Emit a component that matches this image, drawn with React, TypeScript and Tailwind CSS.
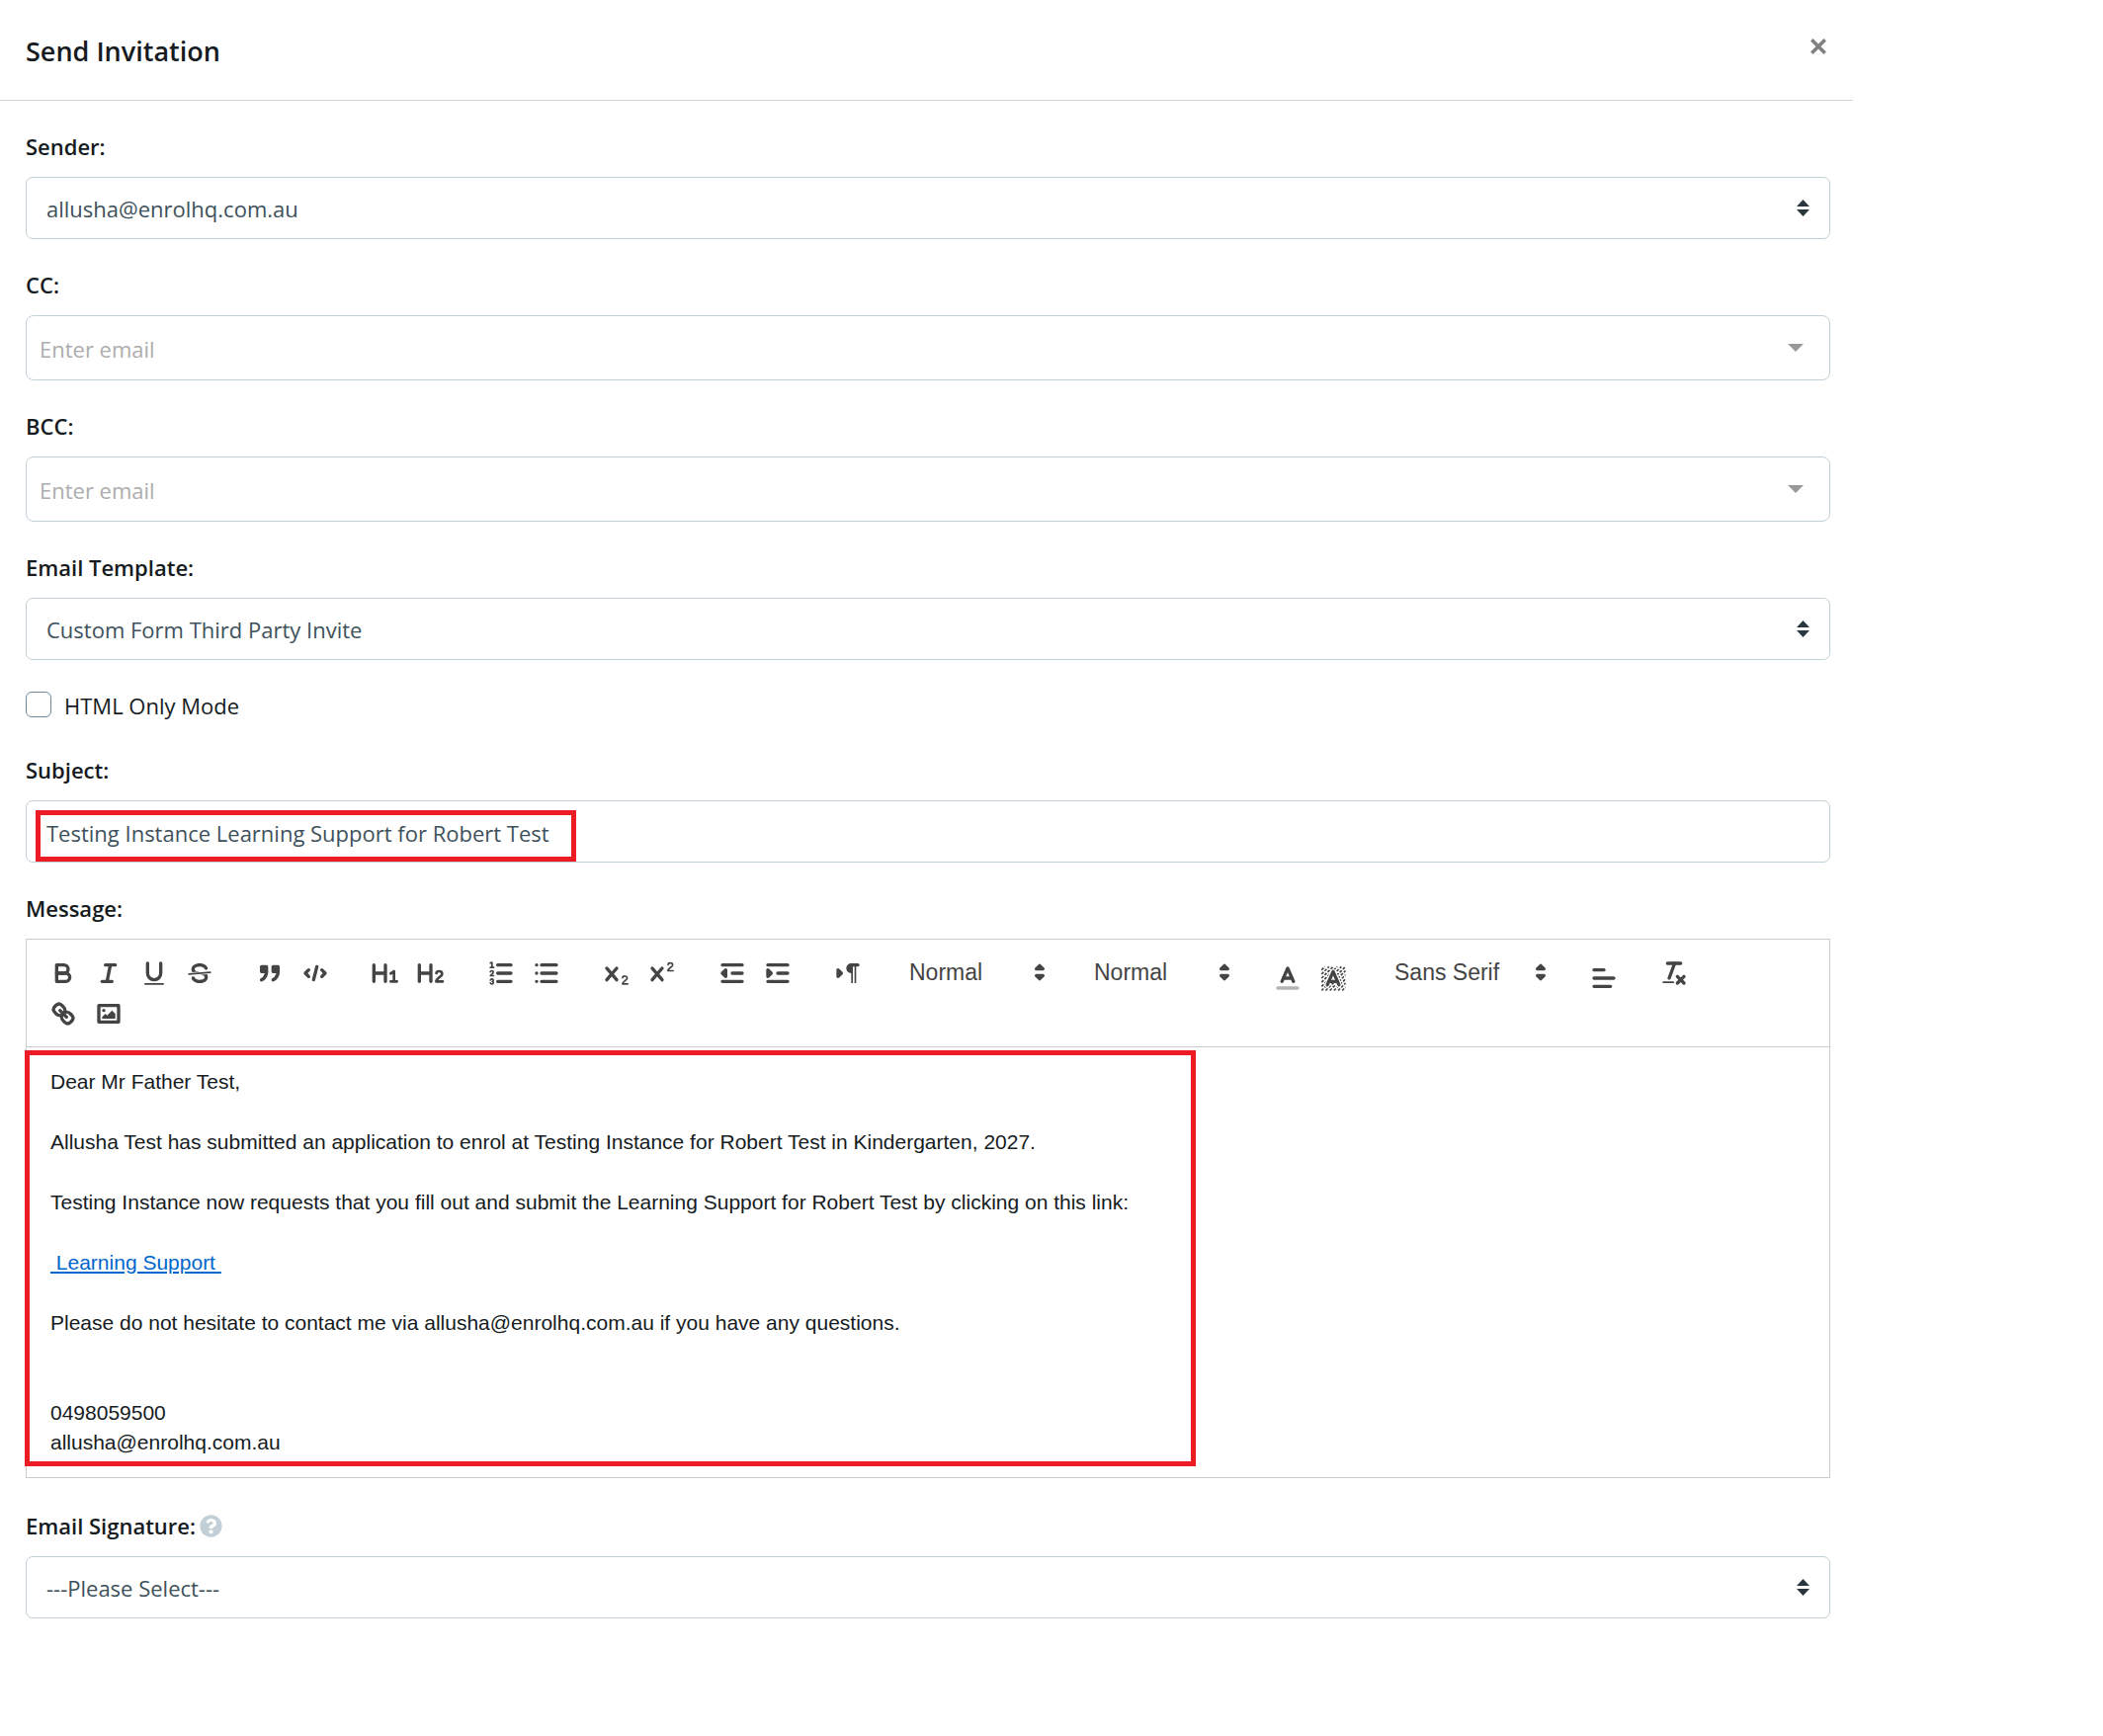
import { useState } from "react";
import type { ReactNode } from "react";
import { FaQuestionCircle } from "react-icons/fa";

const labelClass = "block text-[22px] leading-8 font-semibold text-[#151b1e]";
const controlClass = "block w-full appearance-none bg-white border border-[#c2cfd6] text-[22px] text-[#3e515b] outline-none";

function Icon({ children }: { children: ReactNode }) {
  return (
    <svg viewBox="0 0 18 18" className="w-[30px] h-[30px]" fill="none" stroke="#444" strokeWidth="2" strokeLinecap="round" strokeLinejoin="round">
      {children}
    </svg>
  );
}

const icons: Record<string, ReactNode> = {
  bold: (
    <>
      <path d="M5,4H9.5A2.5,2.5,0,0,1,12,6.5v0A2.5,2.5,0,0,1,9.5,9H5Z" />
      <path d="M5,9h5.5A2.5,2.5,0,0,1,13,11.5v0A2.5,2.5,0,0,1,10.5,14H5Z" />
    </>
  ),
  italic: (
    <>
      <line x1="7" x2="13" y1="4" y2="4" />
      <line x1="5" x2="11" y1="14" y2="14" />
      <line x1="8" x2="10" y1="14" y2="4" />
    </>
  ),
  underline: (
    <>
      <path d="M5,3V9a4,4,0,0,0,4,4H9a4,4,0,0,0,4-4V3" />
      <rect x="3" y="15" width="12" height="1" rx="0.5" fill="#444" stroke="none" />
    </>
  ),
  strike: (
    <>
      <line x1="15.5" x2="2.5" y1="8.5" y2="9.5" strokeWidth="1" />
      <path fill="#444" stroke="none" d="M9.007,8C6.542,7.791,6,7.519,6,6.5,6,5.792,7.283,5,9,5c1.571,0,2.765.679,2.969,1.309a1,1,0,0,0,1.9-.617C13.356,4.106,11.354,3,9,3,6.2,3,4,4.538,4,6.5a3.2,3.2,0,0,0,.5,1.843Z" />
      <path fill="#444" stroke="none" d="M8.984,10C11.457,10.208,12,10.479,12,11.5c0,0.708-1.283,1.5-3,1.5-1.571,0-2.765-.679-2.969-1.309a1,1,0,1,0-1.9.617C4.644,13.894,6.646,15,9,15c2.8,0,5-1.538,5-3.5a3.2,3.2,0,0,0-.5-1.843Z" />
    </>
  ),
  blockquote: (
    <>
      <rect x="4" y="5" width="3" height="3" fill="#444" />
      <rect x="11" y="5" width="3" height="3" fill="#444" />
      <path d="M7,8c0,4.031-3,5-3,5" />
      <path d="M14,8c0,4.031-3,5-3,5" />
    </>
  ),
  code: (
    <>
      <polyline points="5 7 3 9 5 11" />
      <polyline points="13 7 15 9 13 11" />
      <line x1="10" x2="8" y1="5" y2="13" />
    </>
  ),
  "heading 1": (
    <>
      <path d="M2,4V14M9,4V14M2,9H9" />
      <path d="M12.2,9.2L14.2,7.8V14M12.2,14H16" strokeWidth="1.6" />
    </>
  ),
  "heading 2": (
    <>
      <path d="M2,4V14M9,4V14M2,9H9" />
      <path d="M12.3,9C12.5,7.4,15.8,7.3,15.8,9.4C15.8,11,12.2,12.2,12.2,14H16.2" strokeWidth="1.6" />
    </>
  ),
  "ordered list": (
    <>
      <path d="M7,4H15M7,9H15M7,14H15" />
      <path d="M2.5,2.8L3.5,2.5V5.5M2.5,5.5H4.5" strokeWidth="1" />
      <path d="M4.5,10.5h-2c0-.234,1.85-1.076,1.85-2.234A0.959,0.959,0,0,0,2.5,8.156" strokeWidth="1" />
      <path d="M2.5,14.846a0.959,0.959,0,0,0,1.85-.109A0.7,0.7,0,0,0,3.75,14a0.688,0.688,0,0,0,.6-0.736,0.959,0.959,0,0,0-1.85-.109" strokeWidth="1" />
    </>
  ),
  "bullet list": <path d="M6,4H15M6,9H15M6,14H15M3,4H3M3,9H3M3,14H3" />,
  subscript: (
    <>
      <path d="M3,6L9,13M9,6L3,13" />
      <path d="M12.6,11.8C12.7,10.4,15.4,10.4,15.4,12C15.4,13.2,12.5,14,12.5,15.5H15.7" strokeWidth="1" />
    </>
  ),
  superscript: (
    <>
      <path d="M3,6L9,13M9,6L3,13" />
      <path d="M12.6,3.8C12.7,2.4,15.4,2.4,15.4,4C15.4,5.2,12.5,6,12.5,7.5H15.7" strokeWidth="1" />
    </>
  ),
  outdent: (
    <>
      <path d="M3,14H15M3,4H15M9,9H15" />
      <polyline points="5 7 5 11 3 9 5 7" fill="#444" />
    </>
  ),
  indent: (
    <>
      <path d="M3,14H15M3,4H15M9,9H15" />
      <polyline points="3 7 3 11 5 9 3 7" fill="#444" />
    </>
  ),
  direction: (
    <>
      <polygon points="3 11 5 9 3 7 3 11" fill="#444" />
      <line x1="15" x2="11" y1="4" y2="4" />
      <path d="M11,3a3,3,0,0,0,0,6h1V3H11Z" fill="#444" stroke="none" />
      <rect x="11" y="4" width="1" height="11" fill="#444" stroke="none" />
      <rect x="13" y="4" width="1" height="11" fill="#444" stroke="none" />
    </>
  ),
  "text color": (
    <>
      <line x1="3" x2="15" y1="15" y2="15" opacity="0.4" />
      <polyline points="5.5 11 9 3 12.5 11" />
      <line x1="11.63" x2="6.38" y1="9" y2="9" />
    </>
  ),
  "background color": (
    <>
      <path
        d="M2,4L4,2M2,6.5L6.5,2M2,9L9,2M2,11.5L11.5,2M2,14L14,2M2,16.5L16.5,2M4.5,16.5L16.5,4.5M7,16.5L16.5,7M9.5,16.5L16.5,9.5M12,16.5L16.5,12M14.5,16.5L16.5,14.5"
        strokeWidth="1"
        strokeDasharray="1.7 0.9"
        strokeLinecap="butt"
      />
      <polyline points="5.5 13 9 5 12.5 13" stroke="#fff" strokeWidth="3.4" />
      <polyline points="5.5 13 9 5 12.5 13" />
      <line x1="11.63" x2="6.38" y1="11" y2="11" />
    </>
  ),
  align: <path d="M3,9H15M3,14H13M3,4H9" />,
  "clear formatting": (
    <>
      <line x1="5" x2="13" y1="3" y2="3" />
      <line x1="6" x2="9.35" y1="12" y2="3" />
      <path d="M11,11L15,15M15,11L11,15" />
      <rect x="2" y="14" width="7" height="1" rx="0.5" fill="#444" stroke="none" />
    </>
  ),
  link: (
    <>
      <line x1="7" x2="11" y1="7" y2="11" />
      <path d="M8.9,4.577a3.476,3.476,0,0,1,.36,4.679A3.476,3.476,0,0,1,4.577,8.9C3.185,7.5,2.035,6.4,4.217,4.217S7.5,3.185,8.9,4.577Z" />
      <path d="M13.423,9.1a3.476,3.476,0,0,0-4.679-.36,3.476,3.476,0,0,0,.36,4.679c1.392,1.392,2.5,2.542,4.679.36S14.815,10.5,13.423,9.1Z" />
    </>
  ),
  image: (
    <>
      <rect x="3" y="4" width="12" height="10" />
      <circle cx="6" cy="7" r="1" fill="#444" stroke="none" />
      <polyline points="5 12 5 11 7 9 8 10 11 7 13 9 13 12 5 12" fill="#444" stroke="none" />
    </>
  ),
};

// low: picker icons hang a little lower than the plain buttons
function ToolGroup({ names, low }: { names: string[]; low?: boolean }) {
  return (
    <div className="flex mr-[25px]">
      {names.map((name) => (
        <button key={name} type="button" aria-label={name} className={`w-[46px] h-[41px] flex justify-center ${low ? "items-end" : "items-center"}`}>
          <Icon>{icons[name]}</Icon>
        </button>
      ))}
    </div>
  );
}

function ToolSelect({ label, value, wide }: { label: string; value: string; wide?: boolean }) {
  return (
    <div className={`relative mr-[25px] h-[41px] ${wide ? "w-[178px]" : "w-[162px]"}`}>
      <select aria-label={label} className="block w-full h-[41px] appearance-none bg-transparent pl-[14px] text-[23px] text-[#444] outline-none font-['Liberation_Sans',Arial,sans-serif]">
        <option>{value}</option>
      </select>
      <span className="absolute right-px top-[5px] pointer-events-none">
        <Icon>
          <polygon points="7 11 9 13 11 11 7 11" fill="#444" />
          <polygon points="7 7 9 5 11 7 7 7" fill="#444" />
        </Icon>
      </span>
    </div>
  );
}

function SelectField({ id, label, value, hint }: { id: string; label: string; value: string; hint?: boolean }) {
  return (
    <div className="mb-[30px]">
      <div className="flex items-center gap-1 mb-[15px]">
        <label htmlFor={id} className={labelClass}>{label}</label>
        {hint && <FaQuestionCircle className="w-[23px] h-[23px] text-[#c2cfd6]" />}
      </div>
      <div className="relative">
        <select id={id} className={`${controlClass} h-[63px] rounded-[7px] pl-5 pt-0.5`}>
          <option>{value}</option>
        </select>
        <svg viewBox="0 0 13 17" className="absolute right-[21px] top-[23px] w-[13px] h-[17px] pointer-events-none" fill="#29363d">
          <path d="M6.5,0L13,7H0ZM0,10H13L6.5,17Z" />
        </svg>
      </div>
    </div>
  );
}

function EmailField({ id, label }: { id: string; label: string }) {
  const [value, setValue] = useState("");
  return (
    <div className="mb-[30px]">
      <label htmlFor={id} className={`${labelClass} mb-[15px]`}>{label}</label>
      <div className="relative">
        <input
          id={id}
          type="text"
          placeholder="Enter email"
          value={value}
          onChange={(e) => setValue(e.target.value)}
          className={`${controlClass} h-[66px] rounded-lg pl-[13px] pt-0.5 placeholder:text-[#adadad]`}
        />
        <svg viewBox="0 0 16 8" className="absolute right-[27px] top-[29px] w-4 h-2 pointer-events-none" fill="#999">
          <path d="M0,0H16L8,8Z" />
        </svg>
      </div>
    </div>
  );
}

export default function App() {
  const [htmlOnly, setHtmlOnly] = useState(false);
  const [subject, setSubject] = useState("Testing Instance Learning Support for Robert Test");

  return (
    <div className="min-h-screen bg-white font-['Open_Sans','Noto_Sans',sans-serif]">
      <div className="max-w-[1875px]">
        {/* Header */}
        <header className="flex items-start justify-between px-[26px] pt-[30px] h-[102px] border-b border-[#d0d5d8]">
          <h1 className="text-[27px] leading-[44px] font-semibold text-[#151b1e]">Send Invitation</h1>
          <button type="button" aria-label="Close" className="mt-2 p-px">
            <svg viewBox="0 0 16 16" className="w-4 h-4" stroke="#808080" strokeWidth="3.6">
              <path d="M1.3,1.3L14.7,14.7M14.7,1.3L1.3,14.7" />
            </svg>
          </button>
        </header>

        <form className="pl-[26px] pr-[23px] pt-[30px]">
          <SelectField id="sender" label="Sender:" value="allusha@enrolhq.com.au" />
          <EmailField id="cc" label="CC:" />
          <EmailField id="bcc" label="BCC:" />
          <SelectField id="template" label="Email Template:" value="Custom Form Third Party Invite" />

          <div className="flex items-start mb-[33px]">
            <input
              id="html-only"
              type="checkbox"
              checked={htmlOnly}
              onChange={(e) => setHtmlOnly(e.target.checked)}
              className="appearance-none mt-0.5 w-[26px] h-[26px] rounded-md border border-[#6b8a9b] bg-white checked:bg-[#6b8a9b]"
            />
            <label htmlFor="html-only" className="ml-[13px] text-[22px] leading-8 text-[#151b1e]">HTML Only Mode</label>
          </div>

          {/* Subject */}
          <div className="mb-[30px]">
            <label htmlFor="subject" className={`${labelClass} mb-[15px]`}>Subject:</label>
            <div className="relative">
              <input
                id="subject"
                type="text"
                value={subject}
                onChange={(e) => setSubject(e.target.value)}
                className={`${controlClass} h-[63px] rounded-[7px] pl-5 pt-0.5`}
              />
              <div className="absolute left-[10px] top-[10px] w-[547px] h-[52px] border-[5px] border-[#ed1c24] pointer-events-none" />
            </div>
          </div>

          {/* Message */}
          <div className="mb-8">
            <p id="message-label" className={`${labelClass} mb-[15px]`}>Message:</p>
            <div className="border border-[#ccc]">
              <div className="flex flex-wrap pl-[14px] pr-3 py-[13px] border-b border-[#ccc]">
                <ToolGroup names={["bold", "italic", "underline", "strike"]} />
                <ToolGroup names={["blockquote", "code"]} />
                <ToolGroup names={["heading 1", "heading 2"]} />
                <ToolGroup names={["ordered list", "bullet list"]} />
                <ToolGroup names={["subscript", "superscript"]} />
                <ToolGroup names={["outdent", "indent"]} />
                <ToolGroup names={["direction"]} />
                <ToolSelect label="Size" value="Normal" />
                <ToolSelect label="Heading" value="Normal" />
                <ToolGroup names={["text color", "background color"]} low />
                <ToolSelect label="Font" value="Sans Serif" wide />
                <ToolGroup names={["align"]} low />
                <ToolGroup names={["clear formatting"]} />
                <ToolGroup names={["link", "image"]} />
              </div>
              <div className="relative">
                <div
                  role="textbox"
                  aria-labelledby="message-label"
                  contentEditable
                  suppressContentEditableWarning
                  className="px-6 py-5 text-[21px] leading-[30px] text-[#151b1e] outline-none font-['Liberation_Sans',Arial,sans-serif]"
                >
                  <p className="mb-[31px]">Dear Mr Father Test,</p>
                  <p className="mb-[31px]">Allusha Test has submitted an application to enrol at Testing Instance for Robert Test in Kindergarten, 2027.</p>
                  <p className="mb-[31px]">Testing Instance now requests that you fill out and submit the Learning Support for Robert Test by clicking on this link:</p>
                  <p className="mb-[31px]">
                    <a href="#" className="text-[#0066cc] underline">&nbsp;Learning Support&nbsp;</a>
                  </p>
                  <p className="mb-[61px]">Please do not hesitate to contact me via allusha@enrolhq.com.au if you have any questions.</p>
                  <p>0498059500</p>
                  <p>allusha@enrolhq.com.au</p>
                </div>
                <div className="absolute -left-[2px] top-[3px] bottom-[11px] w-[1185px] border-[5px] border-[#ed1c24] pointer-events-none" />
              </div>
            </div>
          </div>

          <SelectField id="signature" label="Email Signature:" value="---Please Select---" hint />
        </form>
      </div>
    </div>
  );
}
